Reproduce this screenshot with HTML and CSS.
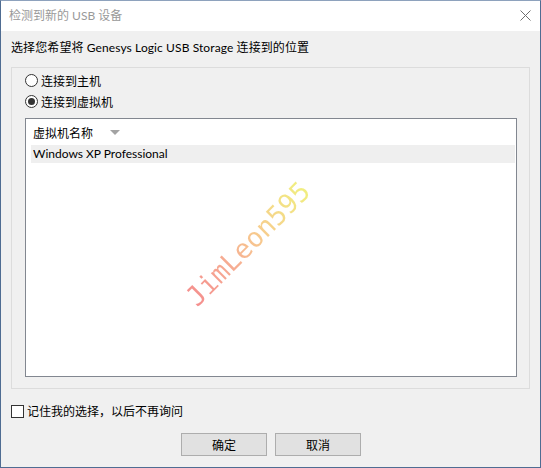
FILE: index.html
```html
<!DOCTYPE html>
<html lang="zh-CN">
<head>
<meta charset="utf-8">
<title>检测到新的 USB 设备</title>
<link rel="stylesheet" href="styles.css">
</head>
<body>
<div class="window">
  <div class="titlebar">
    <span class="title">检测到新的 USB 设备</span>
    <svg class="close" width="11" height="11" viewBox="0 0 11 11"><path d="M0.5 0.5 L10.5 10.5 M10.5 0.5 L0.5 10.5" stroke="#6f6f6f" stroke-width="1" fill="none"/></svg>
  </div>
  <div class="content">
    <div class="prompt">选择您希望将 Genesys Logic USB Storage 连接到的位置</div>
    <div class="group">
      <label class="radio-row"><span class="radio"></span><span>连接到主机</span></label>
      <label class="radio-row"><span class="radio checked"></span><span>连接到虚拟机</span></label>
      <div class="listbox">
        <div class="list-header"><span>虚拟机名称</span><span class="sort"></span></div>
        <div class="list-row">Windows XP Professional</div>
        <div class="watermark">JimLeon595</div>
      </div>
    </div>
    <label class="check-row"><span class="checkbox"></span><span>记住我的选择，以后不再询问</span></label>
    <div class="buttons">
      <div class="btn">确定</div>
      <div class="btn">取消</div>
    </div>
  </div>
</div>
</body>
</html>
```
FILE: styles.css
```css
* { box-sizing: border-box; }
html, body { margin: 0; padding: 0; }
body {
  width: 541px;
  height: 468px;
  font-family: "Lato", "Noto Sans CJK SC", sans-serif;
  font-size: 12px;
  color: #000;
  background: #f0f0f0;
}
.window {
  width: 541px;
  height: 468px;
  border: 1px solid #4f6c92;
  border-top-color: #8ea2bd;
  background: #f0f0f0;
  display: flex;
  flex-direction: column;
}
.titlebar {
  height: 30px;
  background: #fff;
  display: flex;
  align-items: center;
  justify-content: space-between;
  padding: 0 9px 0 8px;
  flex: none;
}
.title { color: #999; line-height: 16px; }
.close { display: block; margin-top: -1px; }
.content {
  padding: 0 10px;
  display: flex;
  flex-direction: column;
}
.prompt {
  margin-top: 9px;
  line-height: 16px;
  letter-spacing: 0.1px;
}
.group {
  margin-top: 11px;
  border: 1px solid #dcdcdc;
  padding: 2px 12px 11px 13px;
}
.radio-row {
  display: flex;
  align-items: center;
  height: 21px;
  gap: 3px;
}
.radio {
  width: 13px;
  height: 13px;
  border: 1px solid #333;
  border-radius: 50%;
  background: #fff;
  display: flex;
  align-items: center;
  justify-content: center;
}
.radio.checked::after {
  content: "";
  width: 7px;
  height: 7px;
  border-radius: 50%;
  background: #333;
}
.listbox {
  position: relative;
  margin-top: 6px;
  height: 259px;
  border: 1px solid #828790;
  background: #fff;
  overflow: hidden;
}
.list-header {
  height: 26px;
  display: flex;
  align-items: center;
  padding-left: 7px;
}
.sort {
  margin-left: 17px;
  width: 0;
  height: 0;
  border-left: 5px solid transparent;
  border-right: 5px solid transparent;
  border-top: 5px solid #a3a3a3;
}
.list-row {
  margin: 0 1px 0 5px;
  height: 18px;
  line-height: 18px;
  padding-left: 2px;
  background: #efefef;
}
.watermark {
  position: absolute;
  left: 141px;
  top: 110px;
  font-family: "DejaVu Sans Mono", monospace;
  font-size: 27px;
  line-height: 30px;
  transform: rotate(-45deg);
  background: linear-gradient(to right, #f37a7a 0%, #f5a080 35%, #f6c47a 60%, #eeee6a 100%);
  -webkit-background-clip: text;
  background-clip: text;
  color: transparent;
  white-space: nowrap;
  opacity: 0.85;
}
.check-row {
  margin-top: 16px;
  display: flex;
  align-items: center;
  gap: 3px;
  height: 13px;
  line-height: 16px;
}
.checkbox {
  width: 13px;
  height: 13px;
  border: 1px solid #333;
  background: #fff;
  flex: none;
}
.buttons {
  margin-top: 15px;
  display: flex;
  justify-content: center;
  gap: 8px;
  padding-left: 1px;
}
.btn {
  width: 86px;
  height: 23px;
  border: 1px solid #adadad;
  background: #e1e1e1;
  display: flex;
  align-items: center;
  justify-content: center;
}
```
